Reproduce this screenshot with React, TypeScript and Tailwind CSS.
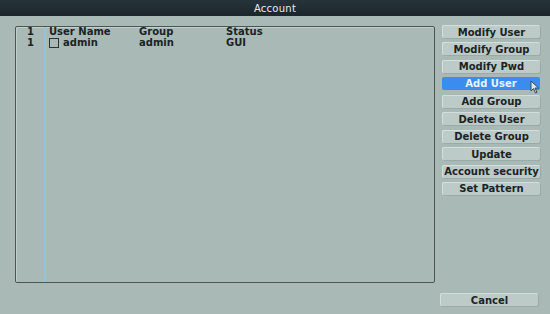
import { Fragment } from "react";

const buttons = [
  "Modify User",
  "Modify Group",
  "Modify Pwd",
  "Add User",
  "Add Group",
  "Delete User",
  "Delete Group",
  "Update",
  "Account security",
  "Set Pattern",
];

const rows = [{ no: "1", name: "admin", group: "admin", status: "GUI" }];

export default function App() {
  return (
    <div
      className="w-[550px] h-[314px] bg-[#a9bab6] text-[#1b2326] flex flex-col overflow-hidden"
      style={{ fontFamily: '"DejaVu Sans", Verdana, sans-serif' }}
    >
      {/* title bar */}
      <div className="h-[16px] bg-gradient-to-b from-[#26343a] to-[#1b262b] flex items-center justify-center text-[10px] text-[#e6ecee] tracking-wide">
        Account
      </div>

      <div className="flex gap-[7px] pl-[15px] pt-[10px]">
        {/* user table */}
        <div className="relative w-[420px] h-[257px] border border-[#4a5654] rounded-[2px] shadow-[inset_1px_1px_0_#c2d0cd]">
          <div className="absolute left-[28px] top-0 bottom-0 w-[2px] bg-[#93c3e2]" />
          <div className="grid grid-cols-[29px_94px_87px_1fr] -mt-[1px] text-[10px] font-bold leading-[11px]">
            <div className="text-center">1</div>
            <div className="pl-[4px]">User Name</div>
            <div>Group</div>
            <div>Status</div>
            {rows.map((r) => (
              <Fragment key={r.no}>
                <div className="text-center">{r.no}</div>
                <div className="pl-[4px] flex items-center gap-[4px]">
                  <span className="inline-block w-[10px] h-[10px] border border-[#2b3335]" />
                  {r.name}
                </div>
                <div>{r.group}</div>
                <div>{r.status}</div>
              </Fragment>
            ))}
          </div>
        </div>

        {/* action buttons */}
        <div className="relative flex flex-col gap-[4.45px] w-[98px] -mt-[1px]">
          {buttons.map((b) => (
            <div
              key={b}
              className={
                b === "Add User"
                  ? "h-[13px] flex items-center justify-center rounded-[2px] bg-[#3a8cee] text-[#e9f2fb] text-[10px] font-bold whitespace-nowrap"
                  : "h-[13px] flex items-center justify-center rounded-[2px] bg-[#bccbc8] border-t border-l border-[#d3dfdc] shadow-[1px_1px_0_#9aaba7] text-[10px] font-bold whitespace-nowrap"
              }
            >
              {b}
            </div>
          ))}
          <svg
            className="absolute left-[88px] top-[55px]"
            width="10"
            height="14"
            viewBox="0 0 10 14"
          >
            <path d="M1 1 L1 11 L3.5 8.5 L5.5 13 L7 12.3 L5 8 L8.5 8 Z" fill="#dfe6ea" stroke="#3d4a55" strokeWidth="1" />
          </svg>
        </div>
      </div>

      <div className="flex justify-end pr-[12px] pt-[10px]">
        <div className="w-[98px] h-[13px] flex items-center justify-center rounded-[2px] bg-[#bccbc8] border-t border-l border-[#d3dfdc] shadow-[1px_1px_0_#9aaba7] text-[10px] font-bold">
          Cancel
        </div>
      </div>
    </div>
  );
}
